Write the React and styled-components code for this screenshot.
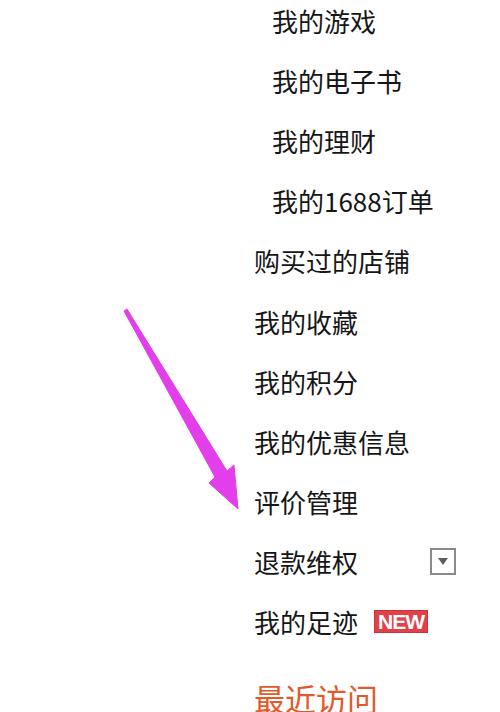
import React from "react";
import styled, { createGlobalStyle } from "styled-components";

const GlobalStyle = createGlobalStyle`
  html, body {
    margin: 0;
    padding: 0;
    background: #ffffff;
    overflow: hidden;
  }
  body {
    font-family: "Noto Sans CJK SC", "Noto Sans", sans-serif;
  }
`;

const Page = styled.div`
  position: relative;
  width: 500px;
  height: 712px;
  overflow: hidden;
  background: #fff;
`;

const Menu = styled.ul`
  list-style: none;
  margin: -10px 0 0 0;
  padding: 0 0 0 254px;
`;

const MenuItem = styled.li`
  display: flex;
  align-items: center;
  width: 202px;
  height: 60.2px;
  padding-left: ${(p) => (p.$sub ? 18 : 0)}px;
  box-sizing: border-box;
  font-size: 26px;
  color: #161616;
  white-space: nowrap;
`;

const RecentLink = styled.li`
  display: flex;
  align-items: center;
  height: 60px;
  margin-top: 15px;
  font-size: 31px;
  color: #e35a28;
`;

const NewBadge = styled.span`
  margin-left: 16px;
  height: 23px;
  padding: 0 3px;
  display: flex;
  align-items: center;
  background: #e2414a;
  border: 1px solid #c8323b;
  box-sizing: border-box;
  color: #fff;
  font-family: "Liberation Sans", Arial, sans-serif;
  font-weight: bold;
  font-size: 21px;
  letter-spacing: -1px;
  line-height: 1;
`;

const ExpandToggle = styled.span`
  margin-left: auto;
  width: 26px;
  height: 27px;
  box-sizing: border-box;
  border: 2px solid #8a8a8a;
  display: flex;
  align-items: center;
  justify-content: center;
  &::after {
    content: "";
    width: 0;
    height: 0;
    border-left: 5px solid transparent;
    border-right: 5px solid transparent;
    border-top: 7px solid #5e5e5e;
  }
`;

const ArrowOverlay = styled.svg`
  position: absolute;
  left: 0;
  top: 0;
  pointer-events: none;
`;

const items = [
  { label: "我的游戏", sub: true },
  { label: "我的电子书", sub: true },
  { label: "我的理财", sub: true },
  { label: "我的1688订单", sub: true },
  { label: "购买过的店铺" },
  { label: "我的收藏" },
  { label: "我的积分" },
  { label: "我的优惠信息" },
  { label: "评价管理" },
  { label: "退款维权", toggle: true },
  { label: "我的足迹", badge: "NEW" },
];

export default function App() {
  return (
    <Page>
      <GlobalStyle />
      <Menu>
        {items.map((item) => (
          <MenuItem key={item.label} $sub={item.sub}>
            {item.label}
            {item.badge && <NewBadge>{item.badge}</NewBadge>}
            {item.toggle && <ExpandToggle />}
          </MenuItem>
        ))}
        <RecentLink>最近访问</RecentLink>
      </Menu>
      <ArrowOverlay width="500" height="712" viewBox="0 0 500 712">
        <polygon
          points="124,311 215,477 209,483 238,509 234,465 227,471 127,309"
          fill="#e23ee9"
          stroke="#e23ee9"
          strokeWidth="1"
          strokeLinejoin="round"
        />
      </ArrowOverlay>
    </Page>
  );
}
